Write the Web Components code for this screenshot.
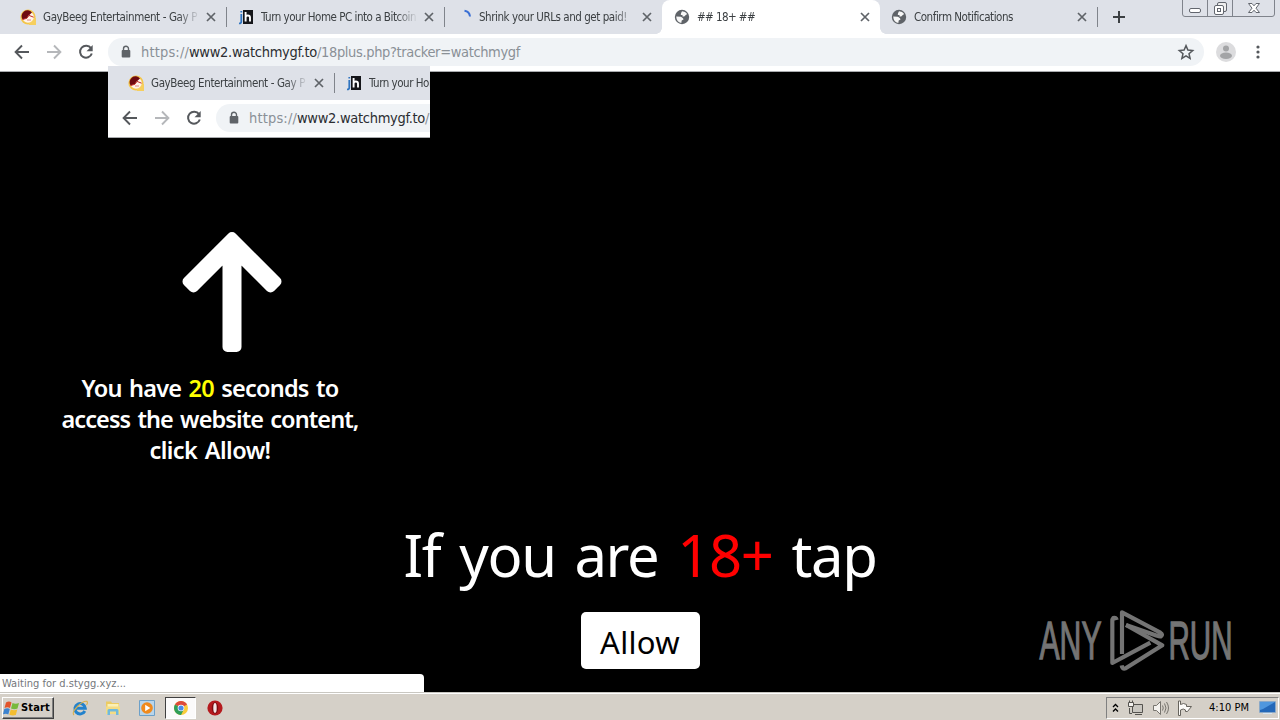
<!DOCTYPE html>
<html lang="en">
<head>
<meta charset="utf-8">
<title>## 18+ ##</title>
<style>
html, body {
  margin: 0;
  width: 1280px;
  height: 720px;
  overflow: hidden;
  background: #000;
}
</style>
</head>
<body>
<desk-screen></desk-screen>
<script>
function html(strings, ...vars) {
  var template = document.createElement("template");
  template.innerHTML = String.raw({raw: strings}, ...vars);
  return template.content;
}
function define(name, content) {
  customElements.define(name, class extends HTMLElement {
    constructor() {
      super();
      this.attachShadow({mode: "open"}).appendChild(content.cloneNode(true));
    }
  });
}

define("desk-screen", html`
<style>
:host {
  display: flex;
  flex-direction: column;
  width: 1280px;
  height: 720px;
  font-family: "DejaVu Sans", sans-serif;
  font-stretch: condensed;
}
age-page { flex: 1; }
</style>
<browser-head></browser-head>
<age-page></age-page>
<task-bar></task-bar>
`);

/* tab strip and toolbar */
define("browser-head", html`
<style>
:host {
  display: block;
  width: 1280px;
  height: 72px;
  flex: none;
  background: #fff;
}
:host([short]) .more { display: none; }
.strip {
  display: flex;
  box-sizing: border-box;
  height: 34px;
  padding-left: 8px;
  background: #dee1e8;
}
.last { margin-left: -1px; }
.plus { margin: 9px 0 0 14px; }
.win { margin-left: auto; margin-right: 4px; }
</style>
<div class="strip">
  <browser-tab>
    <svg slot="icon" width="16" height="16" viewBox="0 0 16 16">
      <circle cx="8" cy="8" r="7.6" fill="#f3c64a"/><path d="M9 9h7v7H9z" fill="#f6cf5e"/>
      <circle cx="8" cy="8" r="5.8" fill="#fff3e8"/>
      <path d="M2.6 10.5A5.9 5.9 0 0 1 12 3.4L8.4 6.7 6.8 9.3z" fill="#6e0a10"/>
      <path d="M2.6 10.5l4.2-1.2L9 6.4l4.6 1.8" stroke="#c22a25" fill="none"/>
      <path d="M7 11h4" stroke="#d88"/>
    </svg>
    <fit-text width="154">GayBeeg Entertainment - Gay P</fit-text>
  </browser-tab>
  <browser-tab>
    <svg slot="icon" width="16" height="16" viewBox="0 0 16 16">
      <path d="M5 1h10v14H5z" fill="#15161a"/>
      <path d="M3.3 5v7.5q0 2-2.3 1.8M3.3 2v1.6" stroke="#2f74c0" stroke-width="1.8" fill="none"/>
      <path d="M7.6 3v9.5M7.6 8.5q0-2 2.2-2t2.2 2v4" stroke="#fff" stroke-width="1.9" fill="none"/>
    </svg>
    <fit-text width="155">Turn your Home PC into a Bitcoin</fit-text>
  </browser-tab>
  <browser-tab class="plain more">
    <svg slot="icon" width="16" height="16" viewBox="0 0 16 16">
      <path d="M8.5 1.8A6.5 6.5 0 0 1 14 7.5" stroke="#3b6fd4" stroke-width="2" fill="none"/>
    </svg>
    <fit-text width="148">Shrink your URLs and get paid!</fit-text>
  </browser-tab>
  <browser-tab class="active more">
    <globe-icon slot="icon"></globe-icon>
    <fit-text width="58">## 18+ ##</fit-text>
  </browser-tab>
  <browser-tab class="last more">
    <globe-icon slot="icon"></globe-icon>
    <fit-text width="99">Confirm Notifications</fit-text>
  </browser-tab>
  <svg class="plus more" width="16" height="16"><path d="M8 2v12M2 8h12" stroke="#3c4043" stroke-width="2"/></svg>
  <svg class="win more" width="94" height="18" fill="none" stroke="#7f838b">
    <path d="M.5 0v14q0 2.5 2.5 2.5h87q2.5 0 2.5-2.5V0M25.5 0v16.500M50.5 0v16.500"/>
    <g stroke="#62666e">
      <rect x="7.5" y="8.5" width="11" height="4" rx="1.5" fill="#fff"/>
      <rect x="35.5" y="2.5" width="9" height="9" rx="1.5" fill="#eee"/>
      <rect x="32.5" y="5.5" width="9" height="9" rx="1.5" fill="#fff"/>
      <rect x="35.5" y="8.5" width="3" height="3"/>
      <path d="M66.5 3.5h3.500l2 2.3 2-2.3h3.500L74 8.2l3.5 4.3H74l-2-2.3-2 2.3h-3.5L70 8.2z" fill="#fff"/>
    </g>
  </svg>
</div>
<tool-bar></tool-bar>
`);

define("browser-tab", html`
<style>
:host {
  position: relative;
  display: flex;
  align-items: center;
  box-sizing: border-box;
  width: 218px;
  height: 34px;
  padding: 0 7px 0 12px;
  color: #3c4043;
  font-size: 11.5px;
}
:host::after {
  content: "";
  position: absolute;
  right: -1px;
  top: 7px;
  width: 1px;
  height: 20px;
  background: #80848b;
}
:host(.plain)::after { display: none; }
:host(.active) {
  z-index: 1;
  background: #fff;
  border-radius: 8px 8px 0 0;
}
/* flared feet of the selected tab */
:host(.active)::before, :host(.active)::after {
  content: "";
  display: block;
  position: absolute;
  top: auto;
  bottom: 0;
  width: 6px;
  height: 6px;
}
:host(.active)::before {
  left: -6px;
  background: radial-gradient(circle at 0 0, transparent 5.5px, #fff 6px);
}
:host(.active)::after {
  right: -6px;
  background: radial-gradient(circle at 100% 0, transparent 5.5px, #fff 6px);
}
.title {
  width: 156px;
  margin-left: 7px;
  overflow: hidden;
  white-space: nowrap;
  -webkit-mask-image: linear-gradient(90deg, #000 135px, transparent 157px);
}
.close { margin-left: auto; }
::slotted([slot=icon]) { flex: none; }
</style>
<slot name="icon"></slot>
<div class="title"><slot></slot></div>
<svg class="close" width="16" height="16"><path d="M4 4l8 8M12 4l-8 8" stroke="#5f6368" stroke-width="1.7"/></svg>
`);

define("globe-icon", html`
<style>:host { display: block; width: 16px; height: 16px; }</style>
<svg width="16" height="16" viewBox="0 0 16 16">
  <circle cx="8" cy="8" r="7.2" fill="#5f6368"/>
  <path d="M8 2.2q3.500 0 5.200 2.800l-1.700 1.300-1.300 1.200H8.5V6H6.8L7 4.200z" fill="#fff" opacity=".95"/>
  <path d="M2.2 7.5l4.800.3 2 1.4.5 1.3-1.8 1L7.300 14Q2.500 13 2.200 7.500z" fill="#fff" opacity=".95"/>
</svg>
`);

define("tool-bar", html`
<style>
:host {
  display: flex;
  align-items: center;
  box-sizing: border-box;
  height: 38px;
  padding: 0 12px 1px;
  border-bottom: 1px solid #a9abae;
  background: #fff;
}
svg { flex: none; display: block; }
.nav { display: flex; gap: 12px; width: 96px; }
.omni {
  display: flex;
  align-items: center;
  box-sizing: border-box;
  width: 1096px;
  height: 28px;
  padding: 0 8px 0 10px;
  border-radius: 14px;
  background: #f0f3f6;
  font-size: 14.5px;
  color: #8a9096;
}
.url { display: flex; margin-left: 7px; }
.host { color: #2b2d31; }
.star { margin-left: auto; }
.avatar { margin: 0 12px; }
</style>
<div class="nav">
  <svg width="20" height="20" fill="none" stroke="#55585c" stroke-width="1.9"><path d="M17 10H4M10 3.500L3.600 10l6.400 6.500"/></svg>
  <svg width="20" height="20" fill="none" stroke="#b5b7ba" stroke-width="1.9"><path d="M3 10h13M10 3.500l6.400 6.500-6.400 6.500"/></svg>
  <svg width="20" height="20" fill="none" stroke="#55585c" stroke-width="2"><path d="M15 6.200A6 6 0 1 0 15.800 11.500"/><path d="M16.700 3v6.200h-6.200z" fill="#55585c" stroke="none"/></svg>
</div>
<div class="omni">
  <svg width="16" height="16"><rect x="3.7" y="6" width="8.6" height="7.5" rx="1" fill="#5f6368"/><path d="M5.500 7V4.800a2.500 2.500 0 0 1 5 0V7" fill="none" stroke="#5f6368" stroke-width="1.4"/></svg>
  <div class="url"><fit-text width="48">https://</fit-text><fit-text class="host" width="128">www2.watchmygf.to</fit-text><fit-text width="203">/18plus.php?tracker=watchmygf</fit-text></div>
  <svg class="star" width="20" height="20"><path d="M10 3.600l1.900 4.500 4.800.4-3.700 3.200 1.100 4.700-4.100-2.500-4.100 2.500L7 11.700 3.300 8.500l4.800-.4z" fill="none" stroke="#55585c" stroke-width="1.5"/></svg>
</div>
<svg class="avatar" width="20" height="20"><circle cx="10" cy="10" r="10" fill="#dcdcde"/><circle cx="10" cy="6.5" r="3" fill="#a3a4a6"/><ellipse cx="10" cy="13.8" rx="6" ry="3.2" fill="#a3a4a6"/></svg>
<svg width="20" height="20" fill="#55585c"><circle cx="10" cy="5" r="1.6"/><circle cx="10" cy="10" r="1.6"/><circle cx="10" cy="15" r="1.6"/></svg>
`);

/* page body */
define("age-page", html`
<style>
:host {
  position: relative;
  display: flex;
  flex-direction: column;
  background: #000;
  color: #fff;
  font-family: "Noto Sans", sans-serif;
  font-stretch: normal;
}
/* copy of the browser header, laid over the real toolbar */
.inset {
  position: absolute;
  left: 108px;
  top: -6px;
  width: 322px;
  height: 72px;
  overflow: hidden;
  font-family: "DejaVu Sans", sans-serif;
  font-stretch: condensed;
}
.hint {
  width: 320px;
  margin: 160px 0 0 50px;
  font-size: 23.5px;
  line-height: 31px;
  font-weight: 600;
  word-spacing: 2px;
  text-align: center;
}
.hint svg { display: block; margin: 0 auto 21px 132px; }
.hint b { color: #ff0; font-weight: 600; }
.ask {
  display: flex;
  flex-direction: column;
  align-items: center;
  margin-top: 49px;
  font-size: 58px;
  line-height: 80px;
  word-spacing: 5px;
}
.ask b { color: #f00; font-weight: 400; }
button {
  width: 119px;
  height: 57px;
  margin-top: 17px;
  padding: 3px 0 0;
  border: 0;
  border-radius: 5px;
  background: #fff;
  color: #000;
  font: 31px "Noto Sans", sans-serif;
}
.status {
  position: absolute;
  left: 0;
  bottom: 0;
  box-sizing: border-box;
  width: 424px;
  height: 18px;
  padding-left: 2px;
  border-radius: 0 4px 0 0;
  background: #fff;
  color: #74777b;
  font: 11px/19px "DejaVu Sans", sans-serif;
  font-stretch: condensed;
}
run-mark {
  position: absolute;
  right: 48px;
  bottom: 18px;
}
</style>
<div class="inset"><browser-head short></browser-head></div>
<div class="hint">
  <svg width="100" height="120" viewBox="182 232 100 120">
    <path d="M232 237L276.500 281.500 270.500 287.500 236.500 253.500V347h-9V253.500L193.500 287.500 187.500 281.500z" fill="#fff" stroke="#fff" stroke-width="10" stroke-linejoin="round"/>
  </svg>
  <fit-text width="257">You have <b>20</b> seconds to</fit-text><br>
  <fit-text width="297">access the website content,</fit-text><br>
  <fit-text width="121">click Allow!</fit-text>
</div>
<div class="ask">
  <fit-text width="473">If you are <b>18+</b> tap</fit-text>
  <button><fit-text width="80">Allow</fit-text></button>
</div>
<div class="status"><fit-text width="124">Waiting for d.stygg.xyz...</fit-text></div>
<run-mark></run-mark>
`);

define("run-mark", html`
<style>:host { display: block; width: 194px; height: 66px; }</style>
<svg width="194" height="66" viewBox="1038 608 194 66" fill="#747474">
  <g font-family="Liberation Sans Narrow, Liberation Sans, sans-serif" font-size="53" stroke="#747474" stroke-width="1.3">
    <text x="1039.500" y="659" textLength="62" lengthAdjust="spacingAndGlyphs">ANY</text>
    <text x="1168.500" y="659" textLength="64" lengthAdjust="spacingAndGlyphs">RUN</text>
  </g>
  <g transform="translate(1020 600) scale(.33333)" fill="none" stroke="#747474" stroke-width="12.5" stroke-linejoin="round" stroke-linecap="butt">
    <path d="M290 60Q288 51 280 54Q277 57 277 64V189L391 128"/>
    <path d="M306 162V37L421 98Q430 104 423 109Q418 110 411 107L318 75"/>
    <path d="M318 75L427 136 317 205Q307 209 305 196"/>
  </g>
</svg>
`);

define("task-bar", html`
<style>
:host {
  display: flex;
  align-items: center;
  flex: none;
  box-sizing: border-box;
  height: 28px;
  padding: 2px 1px 0 2px;
  border-top: 1px solid #c9c7c1;
  box-shadow: inset 0 1px #fff;
  background: #d5d0c8;
  color: #000;
  font-size: 11px;
}
svg { display: block; flex: none; }
.start {
  display: flex;
  align-items: center;
  gap: 1px;
  box-sizing: border-box;
  width: 52px;
  height: 22px;
  border: 1px solid;
  border-color: #fff #404040 #404040 #fff;
  box-shadow: inset -1px -1px #808080;
  font-weight: 700;
}
.ie { margin-left: 18px; }
.dir { margin-left: 17px; }
.wmp { margin-left: 18px; }
.chrome {
  display: flex;
  align-items: center;
  justify-content: center;
  box-sizing: border-box;
  width: 31px;
  height: 22px;
  margin: 0 11px 0 10px;
  border: 1px solid;
  border-color: #404040 #fff #fff #404040;
  background: #fbfafa;
}
.tray {
  display: flex;
  align-items: center;
  box-sizing: border-box;
  width: 173px;
  height: 22px;
  margin-left: auto;
  padding: 0 2px 0 5px;
  border: 1px solid;
  border-color: #808080 #fff #fff #808080;
}
.tray svg + svg { margin-left: 8px; }
.tray fit-text { margin-left: 16px; }
.tray svg.screen { margin-left: auto; }
</style>
<div class="start">
  <svg width="17" height="18" viewBox="0 0 17 18">
    <path d="M3 3.500Q6 1.500 8.500 3.500L7 9Q4.500 7.500 1.500 9z" fill="#e2542c"/>
    <path d="M9.500 4Q12.500 5.500 16 4L14.500 9.500Q11.500 11 8 9.500z" fill="#77b93c"/>
    <path d="M1.300 10Q4.500 8.500 6.800 10L5.300 15.500Q3 14 0 15.300z" fill="#3d83cf"/>
    <path d="M7.800 10.500Q11 12 14.300 10.500L12.800 16Q9.500 17 6.300 15.800z" fill="#f3bd2f"/>
  </svg>
  <fit-text width="29">Start</fit-text>
</div>
<svg class="ie" width="16" height="16" viewBox="0 0 16 16">
  <path d="M12.800 11A5.200 5.200 0 1 1 13.300 8.300H4.500" fill="none" stroke="#2382cc" stroke-width="3"/>
  <path d="M2 15Q-.5 12.500 5.500 6.500T15 1.400Q16 3 14.500 5" fill="none" stroke="#d9b04a" stroke-width="1.1"/>
</svg>
<svg class="dir" width="16" height="16" viewBox="0 0 16 16">
  <path d="M1 1.500h5l1 1.500h7v10H1z" fill="#eccb62"/><path d="M2.500 4h11v5h-11z" fill="#fbf0b5"/>
  <path d="M1 6.500h14V14H1z" fill="#f4dc84"/><path d="M2.500 15V10.500q0-1.500 1.500-1.500h8q1.500 0 1.500 1.500V15h-2.500v-3.500h-6V15z" fill="#6fb9dd"/>
</svg>
<svg class="wmp" width="16" height="16" viewBox="0 0 16 16">
  <path d="M.5.5h15v15H.5z" fill="#b9d5ea" stroke="#6ca0c9"/><circle cx="8" cy="8" r="5.8" fill="#f08a1d"/><path d="M6.200 4.800v6.400L11.300 8z" fill="#fff"/>
</svg>
<div class="chrome">
  <svg width="14" height="14" viewBox="0 0 14 14">
    <circle cx="7" cy="7" r="7" fill="#f9cc3b"/>
    <path d="M7 7L.94 3.500A7 7 0 0 1 13.060 3.500z" fill="#dd4a3b"/>
    <path d="M.94 3.500A7 7 0 0 0 7 14L9.800 8.500 7 7z" fill="#2f9e58"/>
    <circle cx="7" cy="7" r="3.3" fill="#fff"/><circle cx="7" cy="7" r="2.6" fill="#4a8be8"/>
  </svg>
</div>
<svg width="16" height="16" viewBox="0 0 16 16"><circle cx="8" cy="8" r="7.6" fill="#b51a1e"/><ellipse cx="8" cy="8" rx="3.2" ry="5.8" fill="#7a0b10"/><ellipse cx="8" cy="8" rx="1.7" ry="4.9" fill="#f3e6e6"/></svg>
<div class="tray">
  <svg width="7" height="12" fill="none" stroke="#000" stroke-width="1.3"><path d="M1 5l2.500-2.500L6 5M1 9.500L3.500 7 6 9.500"/></svg>
  <svg width="18" height="16" viewBox="0 0 18 16" fill="#c9c6c0" stroke="#55534f">
    <path d="M5.500 4.500h10v8h-10zM8 14.500h7M2.500 8v5.500H5" /><path d="M1.500 2.500h5v4h-5zM2.500.5v2M5.500.5v2" fill="#f4f2ee"/>
  </svg>
  <svg width="16" height="16" viewBox="0 0 16 16" fill="#f4f2ee" stroke="#77746e">
    <path d="M.5 5.500h3l4-4v13l-4-4h-3z"/><path d="M9.500 5.500q1.500 2.500 0 5M11.500 3.500q3 4.500 0 9M13.500 2q4 6 0 12" fill="none"/>
  </svg>
  <svg width="16" height="16" viewBox="0 0 16 16" fill="#fbfaf8" stroke="#66635d">
    <path d="M1.500 1v14.500h2V10q3-2 5 0v1.500h2l4-5H9.500V4.500q-3-2-6 0V1z"/>
  </svg>
  <fit-text width="40">4:10 PM</fit-text>
  <svg class="screen" width="17" height="14" viewBox="0 0 17 14"><path d="M1 1h15v10H1z" fill="#2468b8"/><path d="M1 1h15L4 8 1 9z" fill="#4f97de"/><path d="M4 12.500h9" stroke="#d8e6f2"/><path d="M.5.5h16v11H.5z" fill="none" stroke="#8aa9c8"/></svg>
</div>
`);

/* one line of text, tracked so that it takes the given width */
customElements.define("fit-text", class extends HTMLElement {
  constructor() {
    super();
    this.attachShadow({mode: "open"}).appendChild(html`<style>:host { display: inline-block; white-space: nowrap; }</style><slot></slot>`);
  }
  connectedCallback() {
    var width = Number(this.getAttribute("width"));
    var natural = this.getBoundingClientRect().width;
    if ( !natural )
      return;
    this.style.letterSpacing = (width-natural)/this.textContent.length + "px";
  }
});
</script>
</body>
</html>
